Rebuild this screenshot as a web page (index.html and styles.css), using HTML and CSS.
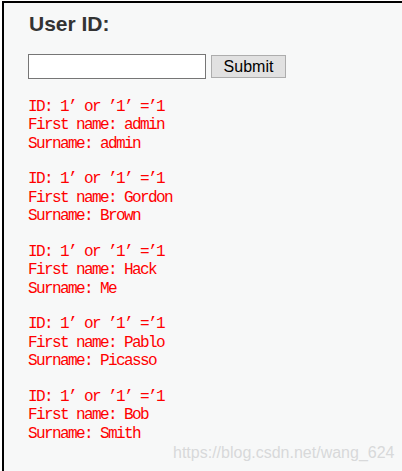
FILE: index.html
```
<!DOCTYPE html>
<html>
<head>
<meta charset="utf-8">
<link rel="stylesheet" href="styles.css">
</head>
<body>
<div class="frame">
  <h2 class="title">User ID:</h2>
  <form class="form-row">
    <input class="field" type="text" name="id">
    <button class="btn" type="button">Submit</button>
  </form>
  <pre class="result">ID: 1’ or ’1’ =’1
First name: admin
Surname: admin</pre>
  <pre class="result">ID: 1’ or ’1’ =’1
First name: Gordon
Surname: Brown</pre>
  <pre class="result">ID: 1’ or ’1’ =’1
First name: Hack
Surname: Me</pre>
  <pre class="result">ID: 1’ or ’1’ =’1
First name: Pablo
Surname: Picasso</pre>
  <pre class="result">ID: 1’ or ’1’ =’1
First name: Bob
Surname: Smith</pre>
</div>
<div class="watermark">https://blog.csdn.net/wang_624</div>
</body>
</html>
```
FILE: styles.css
```
html, body {
  margin: 0;
  padding: 0;
  background: #ffffff;
  height: 100%;
  overflow: hidden;
}
.frame {
  margin: 1px 0 0 2px;
  border-top: 2px solid #000;
  border-left: 2px solid #000;
  background: #f7f8f8;
  height: 480px;
  padding-left: 24px;
  box-sizing: border-box;
}
.title {
  margin: 9px 0 0 1px;
  font-family: "Liberation Sans", Arial, sans-serif;
  font-weight: bold;
  font-size: 21px;
  line-height: 24px;
  color: #333333;
}
.form-row {
  display: flex;
  align-items: center;
  margin: 18px 0 0 0;
  gap: 5px;
}
.field {
  width: 178px;
  height: 25px;
  box-sizing: border-box;
  border: 1px solid #767676;
  background: #fff;
  margin: 0;
  padding: 0;
}
.btn {
  width: 75px;
  height: 23px;
  box-sizing: border-box;
  border: 1px solid #adadad;
  background: #e1e1e1;
  font-family: "Liberation Sans", Arial, sans-serif;
  font-size: 16px;
  color: #000;
  padding: 0;
  margin: 0;
  line-height: 20px;
}
.result {
  margin: 0 0 16.5px 0;
  font-family: "Liberation Mono", monospace;
  font-size: 16px;
  letter-spacing: -1.6px;
  line-height: 18.67px;
  color: #ff0000;
}
.form-row + .result {
  margin-top: 18.5px;
}
.watermark {
  position: absolute;
  left: 173px;
  top: 444px;
  font-family: "Liberation Sans", Arial, sans-serif;
  font-size: 16px;
  line-height: 18px;
  color: #d8d9da;
}
```
